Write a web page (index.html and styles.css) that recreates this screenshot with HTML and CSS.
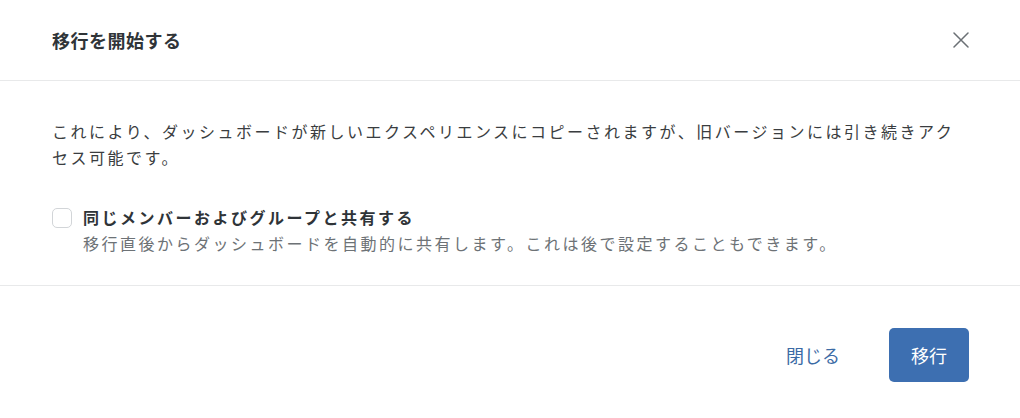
FILE: index.html
```html
<!DOCTYPE html>
<html lang="ja">
<head>
  <meta charset="utf-8">
  <title>移行を開始する</title>
  <link rel="stylesheet" href="styles.css">
</head>
<body>
  <div class="modal">
    <div class="modal-header">
      <h2 class="modal-title">移行を開始する</h2>
      <button class="close-btn" aria-label="閉じる">
        <svg width="16" height="16" viewBox="0 0 16 16">
          <path d="M1 1 L15 15 M15 1 L1 15" stroke="#6b7075" stroke-width="1.5" fill="none" stroke-linecap="round"/>
        </svg>
      </button>
    </div>

    <div class="modal-body">
      <p class="lead">これにより、ダッシュボードが新しいエクスペリエンスにコピーされますが、旧バージョンには引き続きアクセス可能です。</p>

      <label class="option">
        <input type="checkbox" class="option-check">
        <span class="option-text">
          <span class="option-label">同じメンバーおよびグループと共有する</span>
          <span class="option-desc">移行直後からダッシュボードを自動的に共有します。これは後で設定することもできます。</span>
        </span>
      </label>
    </div>

    <div class="modal-footer">
      <button class="btn btn-link">閉じる</button>
      <button class="btn btn-primary">移行</button>
    </div>
  </div>
</body>
</html>
```

FILE: styles.css
```css
body {
  margin: 0;
  background: #fff;
  font-family: "Noto Sans CJK JP", "Noto Sans", sans-serif;
  color: #3a3d40;
}
.modal {
  width: 1020px;
  background: #fff;
}
.modal-header {
  display: flex;
  align-items: center;
  justify-content: space-between;
  padding: 28px 52px 28px 52px;
  border-bottom: 1px solid #e8e9ea;
}
.modal-title {
  margin: 0;
  font-size: 18px;
  line-height: 24px;
  font-weight: 700;
  letter-spacing: 0.5px;
  color: #2f3438;
}
.close-btn {
  background: none;
  border: none;
  padding: 0;
  margin-right: -1px;
  width: 16px;
  height: 16px;
  display: flex;
  cursor: pointer;
}
.modal-body {
  padding: 37px 52px 29px 52px;
  border-bottom: 1px solid #e8e9ea;
}
.lead {
  margin: 0;
  font-size: 16px;
  line-height: 26px;
  letter-spacing: 2.5px;
  color: #3a3d40;
}
.option {
  display: flex;
  align-items: flex-start;
  gap: 11px;
  margin-top: 34px;
  cursor: pointer;
}
.option-check {
  appearance: none;
  -webkit-appearance: none;
  flex: none;
  width: 20px;
  height: 20px;
  margin: 4px 0 0 0;
  border: 1px solid #d2d5d8;
  border-radius: 5px;
  background: #fff;
}
.option-text {
  display: flex;
  flex-direction: column;
  font-size: 16px;
  line-height: 26px;
  letter-spacing: 2.5px;
}
.option-label {
  font-weight: 700;
  color: #2f3438;
}
.option-desc {
  color: #6d7276;
}
.modal-footer {
  display: flex;
  justify-content: flex-end;
  gap: 27px;
  padding: 42px 51px 36px 52px;
}
.btn {
  font-family: inherit;
  font-size: 18px;
  height: 54px;
  padding: 0 22px;
  border-radius: 5px;
  border: none;
  cursor: pointer;
}
.btn-link {
  background: none;
  color: #3c6ba5;
}
.btn-primary {
  width: 80px;
  background: #3d6fb1;
  color: #fff;
}
```
